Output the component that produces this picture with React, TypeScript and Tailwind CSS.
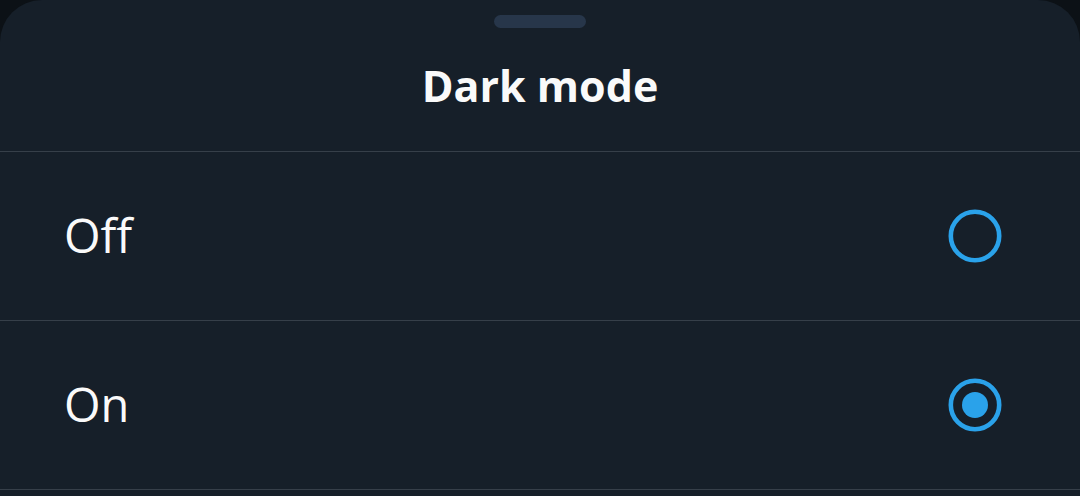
const FONT = { fontFamily: '"Open Sans", "Noto Sans", sans-serif' };

type Option = { id: string; label: string };

const OPTIONS: Option[] = [
  { id: "off", label: "Off" },
  { id: "on", label: "On" },
];

function Radio({ checked }: { checked: boolean }) {
  return (
    <svg width="56" height="56" viewBox="0 0 56 56" aria-hidden>
      <circle cx="28" cy="28" r="24.2" fill="none" stroke="#2aa2ea" strokeWidth="4.6" />
      {checked ? <circle cx="28" cy="28" r="13" fill="#2aa2ea" /> : null}
    </svg>
  );
}

export default function App() {
  const selected = "on";

  return (
    <div className="h-[496px] w-[1080px] overflow-hidden bg-[#0c1116]" style={FONT}>
      <div className="h-full rounded-t-[42px] bg-[#161f29]">
        {/* sheet header */}
        <div className="flex h-[152px] flex-col items-center border-b border-[#363f49]">
          <div className="mt-[15px] h-[13px] w-[92px] rounded-full bg-[#27364a]" />
          <h1 className="mt-[30px] text-[43px] font-bold leading-[56px] text-[#fafafa]">
            Dark mode
          </h1>
        </div>

        {OPTIONS.map((opt) => (
          <div
            key={opt.id}
            className="flex h-[169px] items-center justify-between border-b border-[#363f49] pl-[64px] pr-[77px]"
          >
            <span className="pb-[3px] text-[47px] leading-[62px] text-[#fafafa]">{opt.label}</span>
            <Radio checked={opt.id === selected} />
          </div>
        ))}
      </div>
    </div>
  );
}
